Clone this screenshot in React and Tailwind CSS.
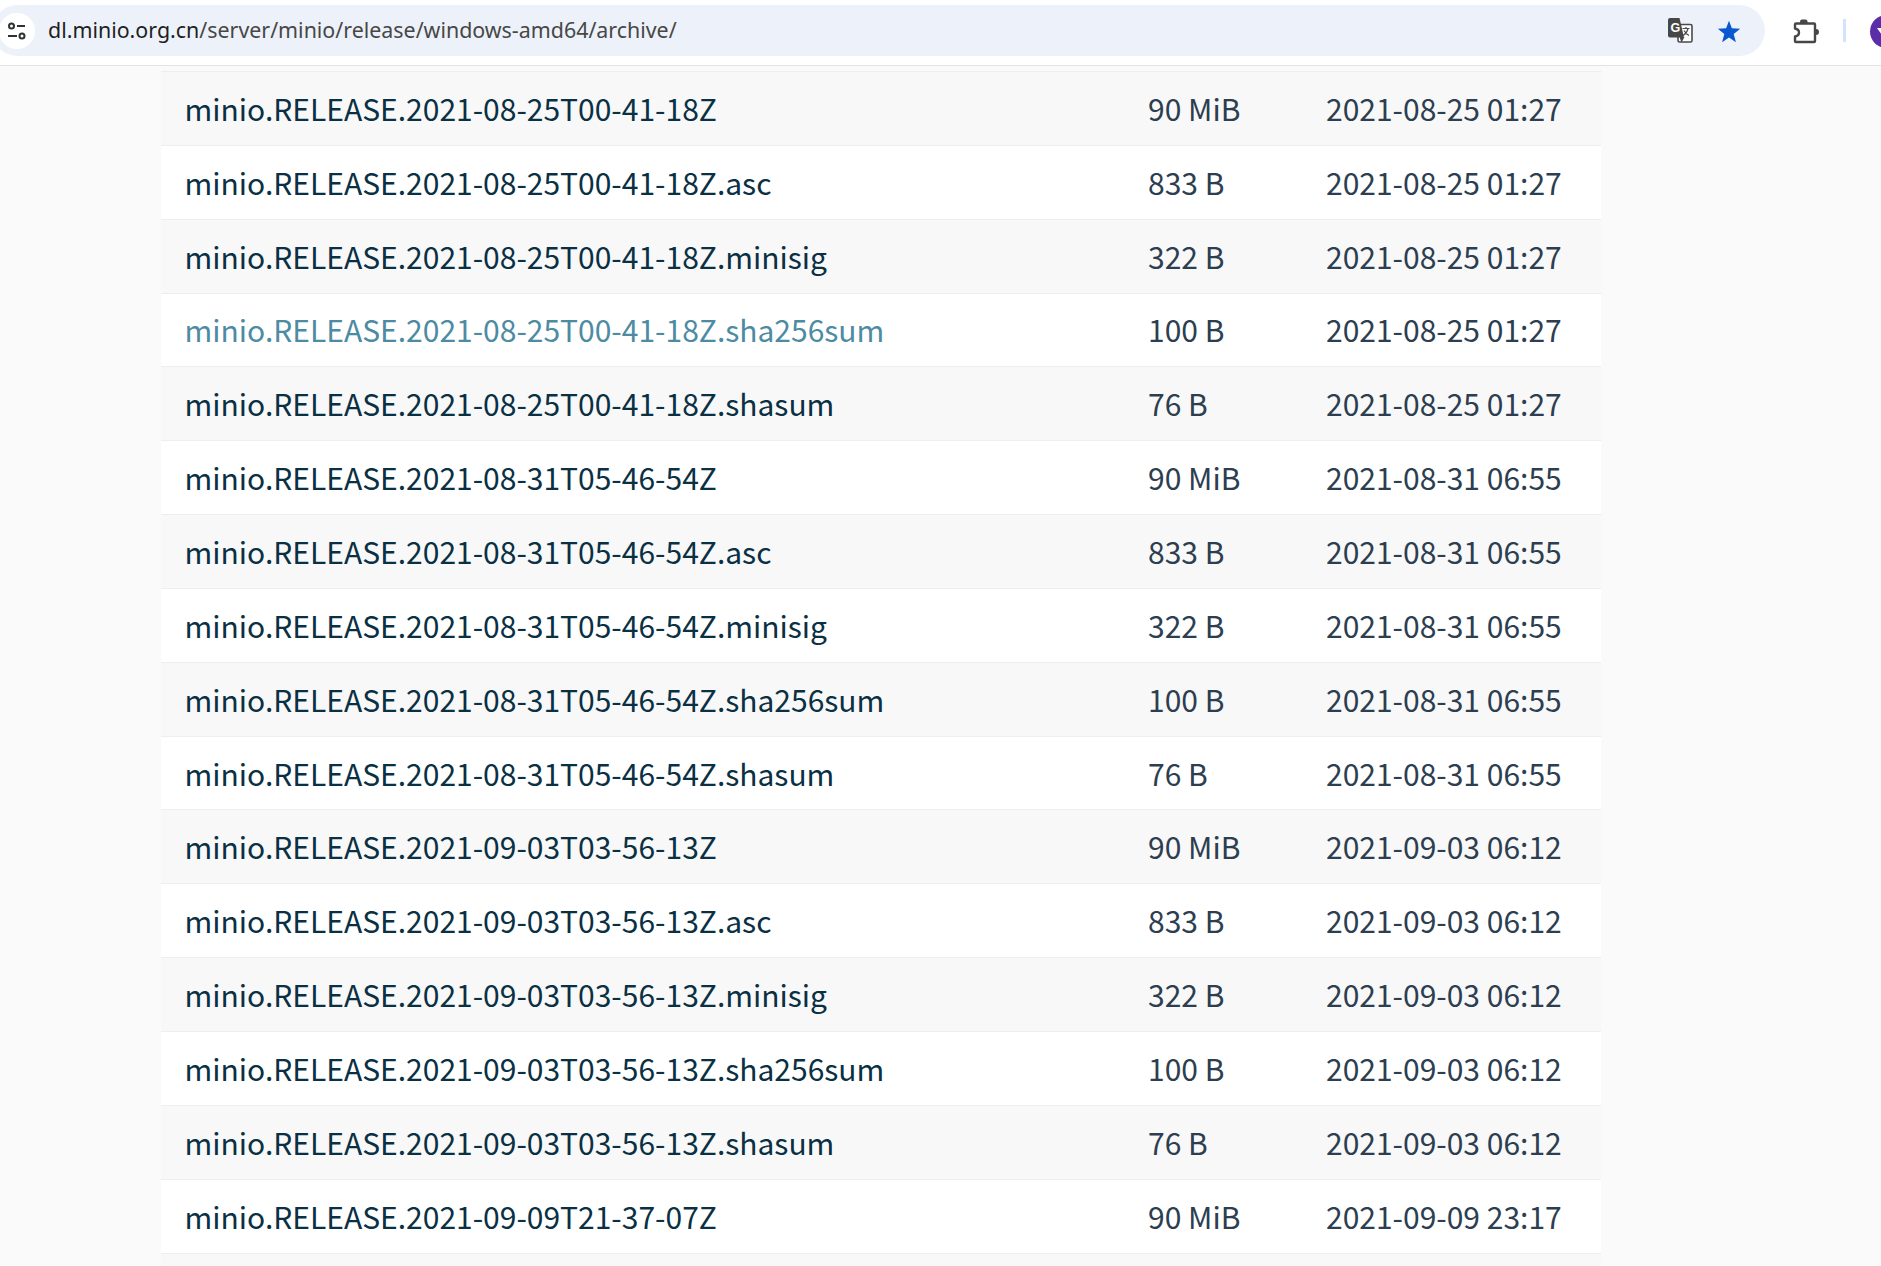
import React from 'react';

const groups = [
  { name: 'minio.RELEASE.2021-08-25T00-41-18Z', date: '2021-08-25 01:27' },
  { name: 'minio.RELEASE.2021-08-31T05-46-54Z', date: '2021-08-31 06:55' },
  { name: 'minio.RELEASE.2021-09-03T03-56-13Z', date: '2021-09-03 06:12' },
];

const variants = [
  { ext: '', size: '90 MiB' },
  { ext: '.asc', size: '833 B' },
  { ext: '.minisig', size: '322 B' },
  { ext: '.sha256sum', size: '100 B' },
  { ext: '.shasum', size: '76 B' },
];

const rows = groups.flatMap(g => variants.map(v => ({ name: g.name + v.ext, size: v.size, date: g.date })));
rows.push({ name: 'minio.RELEASE.2021-09-09T21-37-07Z', size: '90 MiB', date: '2021-09-09 23:17' });
rows.push({ name: '', size: '', date: '' });

function TuneIcon() {
  return (
    <svg width="20" height="20" viewBox="0 0 20 20" fill="none" stroke="#303134" strokeWidth="2">
      <circle cx="4.500" cy="5" r="2.500" />
      <path d="M10 5h8" />
      <path d="M1 15h9" />
      <circle cx="15" cy="15" r="2.500" />
    </svg>
  );
}

function TranslateIcon() {
  return (
    <svg width="25" height="25" viewBox="0 0 25 25">
      <rect x="10" y="6.500" width="14" height="17.500" rx="1.500" fill="#fff" stroke="#4a4a4a" strokeWidth="1.600" />
      <path d="M0 2A2 2 0 0 1 2 0h9.500l4.500 19.500H2a2 2 0 0 1-2-2Z" fill="#474747" />
      <path d="M11.500 19l2 5.500 3-5.500Z" fill="#474747" />
      <text x="2.500" y="14" fontSize="12.500" fontWeight="700" fill="#fff" fontFamily="Liberation Sans, sans-serif">G</text>
      <path d="M14.500 10.500h7M18 9v1.500M20 10.500c-.8 3.500-2.500 5.500-5 7M16 12.500c1 2 2.800 3.800 5 5" fill="none" stroke="#4a4a4a" strokeWidth="1.200" />
    </svg>
  );
}

function ExtensionIcon() {
  return (
    <svg width="30" height="30" viewBox="0 0 30 30" fill="none">
      <path d="M5 7.500h18a1 1 0 0 1 1 1V25a1 1 0 0 1-1 1H5a1 1 0 0 1-1-1v-4.500c3-.6 4-2.300 4-4s-1-3.400-4-4V8.500a1 1 0 0 1 1-1Z" stroke="#474747" strokeWidth="2.400" strokeLinejoin="round" />
      <path d="M9 7.500V5.500a2 2 0 0 1 2-2h3.500a2 2 0 0 1 2 2v2Z" fill="#474747" />
      <path d="M24 13h1a3 3 0 0 1 0 6h-1Z" fill="#474747" />
    </svg>
  );
}

export default function App() {
  return (
    <div className="h-[1266px] overflow-hidden bg-[#fafafa] font-['Noto_Sans_CJK_SC','Noto_Sans',sans-serif]">
      <header className="h-[66px] bg-white border-b border-[#e3e3e3] flex items-start pt-[5px] overflow-hidden">
        <div className="w-[1773px] h-[51px] -ml-[8px] pl-[8px] shrink-0 bg-[#edf2fa] rounded-full flex items-center font-['Noto_Sans',sans-serif]">
          <div className="w-[36px] h-[36px] -ml-[1px] rounded-full bg-white flex items-center justify-center shrink-0">
            <TuneIcon />
          </div>
          <div className="ml-[13px] text-[21.400px] text-[#1f1f1f] whitespace-nowrap">
            dl.minio.org.cn<span className="text-[#474747]">/server/minio/release/windows-amd64/archive/</span>
          </div>
          <div className="ml-auto mr-[24px] flex items-center gap-[24px]">
            <TranslateIcon />
            <svg className="mt-[2px]" width="24" height="24" viewBox="0 0 24 24" fill="#0b57d0">
              <path d="M12 .800l2.900 7.500 8.300.5-6.500 5.200 2.200 8.200L12 17.600 5.100 22.200l2.200-8.200L.800 8.800l8.300-.5Z" />
            </svg>
          </div>
        </div>
        <div className="ml-[26px] h-[51px] flex items-center shrink-0">
          <ExtensionIcon />
        </div>
        <div className="ml-[22px] mt-[14px] w-[3px] h-[23px] bg-[#d3e3fd] shrink-0" />
        <div className="ml-[24px] mt-[10px] w-[33px] h-[33px] rounded-full bg-[#5b2da8] shrink-0 flex items-center pl-[7px]">
          <svg width="14" height="14" viewBox="0 0 14 14" fill="#fff">
            <path d="M0 3h14L7 13Z" />
          </svg>
        </div>
      </header>

      <div className="mt-[5px] ml-[161px] w-[1440px]">
        {rows.map((r, i) => (
          <div
            key={i}
            className={`h-[73.85px] grid grid-cols-[963.500px_178px_1fr] items-center border-t-[1.500px] border-[#eeeeee] pl-[23.500px] text-[30px] text-[#2c3e50] ${i % 2 === 0 ? 'bg-[#f8f8f8]' : 'bg-white'}`}
          >
            <span className={i === 3 ? 'text-[#4d8ba3]' : 'text-[#0a3044]'}>{r.name}</span>
            <span>{r.size}</span>
            <span>{r.date}</span>
          </div>
        ))}
      </div>
    </div>
  );
}
